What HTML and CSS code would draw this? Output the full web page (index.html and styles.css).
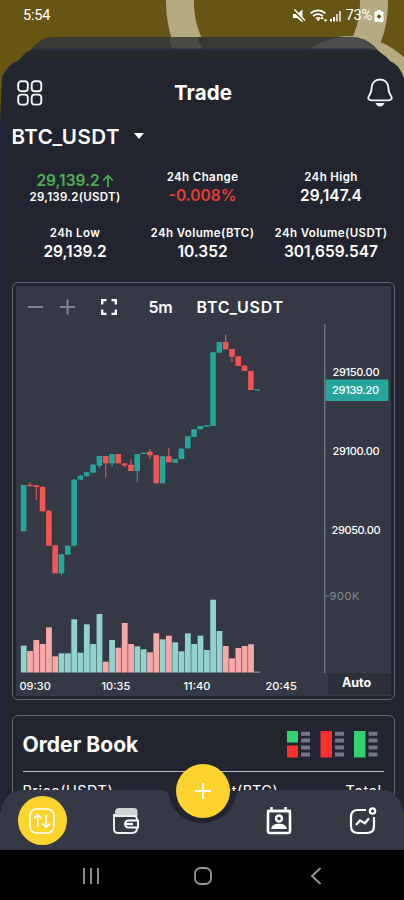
FILE: index.html
```html
<!DOCTYPE html>
<html lang="en">
<head>
<meta charset="utf-8">
<meta name="viewport" content="width=device-width, initial-scale=1">
<title>Trade</title>
<link rel="stylesheet" href="styles.css">
</head>
<body>
<div class="phone">
  <svg class="backdrop" width="404" height="120" viewBox="0 0 404 120">
    <rect width="404" height="120" fill="#675514"/>
    <g fill="none" stroke="#b5aa82" stroke-width="28">
      <circle cx="277" cy="3" r="97"/>
      <circle cx="350" cy="115" r="65"/>
    </g>
    <path d="M17 64 L35 45 Q43 37 53 37 H351 Q364 37 374 46 L391 64Z" fill="#383933"/>
    <path d="M169 37H197L203 50H172Z" fill="#4a4b42"/>
    <path d="M307 50Q326 37 347 37Q365 37 377 50Z" fill="#4b4c4b"/>
    <path d="M2 77Q8 64 19 60Q28 49 35 49H370Q382 51 390 61Q399 64 404 78V120H0Z" fill="#24282d"/>
    <path d="M35 49.5H370" stroke="#262d43" stroke-width="2"/>
  </svg>
  <header class="status">
    <span>5:54</span>
    <div class="status-icons">
      <svg width="52" height="16" viewBox="0 0 52 16" fill="#fff">
        <path d="M0 6h4l5.500-4.500v13L4 10H0z"/>
        <path d="M0 2l12 11" stroke="#675514" stroke-width="2.500"/><path d="M1.500 1.500l10.500 11" stroke="#fff" stroke-width="1.500"/>
        <g fill="none" stroke="#fff" stroke-width="1.700"><path d="M17.500 5.200Q25 -.5 32.500 5.200M20 8Q25 4.200 30 8M23 10.500q2-1.500 4 0"/></g>
        <path d="M23.500 11h3.500l-1.700 2.300zM29 8.500l2 2.500h-4zM32.500 14l-2-2.500h4z"/>
        <path d="M37 11h2v2.500h-2zM40 9h2v4.500h-2z"/><path d="M43 6h2v7.500h-2zM46 3h2v10.500h-2z" opacity=".7"/>
      </svg>
      <span class="battery-label">73%</span>
      <svg width="10" height="12" viewBox="0 0 10 12"><path d="M3 0h4v1.500h1.500q1 0 1 1V11q0 1-1 1h-7q-1 0-1-1V2.500q0-1 1-1H3z" fill="#fff"/><path d="M5 4l2.300 2.500L5 9 2.700 6.500z" fill="#675514"/></svg>
    </div>
  </header>

  <main class="sheet">
    <div class="titlebar">
      <svg width="26" height="26" viewBox="0 0 26 26" fill="none" stroke="#f4f4f6" stroke-width="1.9"><rect x="1.200" y="1.200" width="9.600" height="10" rx="3"/><rect x="14.700" y="1.200" width="9.600" height="10" rx="3"/><rect x="1.200" y="14.600" width="9.600" height="10" rx="3"/><rect x="14.700" y="14.600" width="9.600" height="10" rx="3"/></svg>
      <h1>Trade</h1>
      <svg width="26" height="30" viewBox="0 0 26 30"><path d="M13 1.500C8 1.500 4.600 5 4.600 10c0 4.500-.9 5.300-2.500 7.700-1.800 2.700-.6 4.700 2.900 4.700h16c3.500 0 4.700-2 2.900-4.700-1.600-2.400-2.500-3.200-2.500-7.700C21.400 5 18 1.500 13 1.500z" fill="none" stroke="#f4f4f6" stroke-width="1.900"/><path d="M8.500 25h9q-1.500 3.500-4.500 3.500T8.500 25z" fill="#f4f4f6"/></svg>
    </div>

    <div class="pair"><span>BTC_USDT</span><i class="caret"></i></div>

    <section class="stats">
      <div class="stat last"><b class="up">29,139.2<svg width="12" height="14" viewBox="0 0 12 14" fill="none" stroke="#4caf50" stroke-width="1.700"><path d="M6 13V2M1.200 6.500L6 1.700l4.800 4.800"/></svg></b><small>29,139.2(USDT)</small></div>
      <div class="stat"><small>24h Change</small><b class="down">-0.008%</b></div>
      <div class="stat"><small>24h High</small><b>29,147.4</b></div>
      <div class="stat"><small>24h Low</small><b>29,139.2</b></div>
      <div class="stat"><small>24h Volume(BTC)</small><b>10.352</b></div>
      <div class="stat"><small>24h Volume(USDT)</small><b>301,659.547</b></div>
    </section>

    <section class="card chart-card">
      <div class="chart-panel">
        <div class="toolbar">
          <svg class="zoom-icons" width="48" height="18" viewBox="0 0 48 18" stroke="#848791" stroke-width="2"><path d="M0 9h15M32 9h15M39.500 1.500v15"/></svg>
          <svg class="expand" width="16" height="16" viewBox="0 0 16 16" fill="none" stroke="#fff" stroke-width="2.300"><path d="M1.200 5.500V1.200h4.300M10.500 1.200h4.300v4.300M14.800 10.500v4.300h-4.300M5.500 14.800H1.200v-4.300"/></svg>
          <span class="interval">5m</span><span class="symbol">BTC_USDT</span>
        </div>
        <svg class="plot" id="plot" width="373" height="349" viewBox="16.500 324 373 349">
          <path d="M37 336V672M118 336V672M200 336V672M282 336V672M20 371H324M20 451H324M20 530H324" stroke="#393d48" fill="none"/>
          <g id="candles"></g><g id="volume"></g>
          <path d="M325.300 324V673" stroke="#777b85" stroke-width="1.300"/>
          <rect x="326" y="379.500" width="63" height="21.500" fill="#26a69a"/>
          <g class="prices"><text x="333" y="376.300" textLength="47">29150.00</text><text x="332.500" y="394.200" textLength="47">29139.20</text><text x="333" y="455.300" textLength="47">29100.00</text><text x="332" y="533.600" textLength="49">29050.00</text></g>
          <path d="M325.500 596h4" stroke="#777b85"/><text class="vol-label" x="330" y="600" textLength="30">900K</text>
        </svg>
        <div class="times"><span>09:30</span><span>10:35</span><span>11:40</span><span>20:45</span><b>Auto</b></div>
      </div>
    </section>

    <section class="card book">
      <div class="book-head">
        <h2>Order Book</h2>
        <svg width="91" height="27" viewBox="0 0 91 27"><path d="M0 0h11v11.500H0zM67 0h11.500v26.500H67z" fill="#31d36f"/><path d="M0 14.500h11V26.500H0zM33.500 0H45v26.500H33.500z" fill="#fd3030"/><path d="M14 2.800h9M14 9.500h9M14 16.500h9M14 23.500h9M48 2.800h9M48 9.500h9M48 16.500h9M48 23.500h9M81.500 2.800h9M81.500 9.500h9M81.500 16.500h9M81.500 23.500h9" stroke="#74778a" stroke-width="4"/></svg>
      </div>
      <div class="columns"><span>Price(USDT)</span><span>Amount(BTC)</span><span>Total</span></div>
    </section>
  </main>

  <nav class="tabs">
    <svg class="tabs-bg" width="404" height="62" viewBox="0 0 404 62"><path d="M0 62V27Q4 2 22 2H160Q168 2 169 8A34 33 0 0 0 236 8Q237 2 245 2H382Q400 2 404 27V62z" fill="#353945"/></svg>
    <div class="tab active"><svg width="28" height="28" viewBox="0 0 28 28" fill="none" stroke="#fff" stroke-width="1.600"><rect x="2" y="2" width="24" height="24" rx="6.500"/><path d="M9.800 20V8M6 11.500L9.800 7.700l3.800 3.800M18.200 8v12M14.400 16.500l3.800 3.800 3.800-3.800"/></svg></div>
    <div class="tab"><svg width="28" height="28" viewBox="0 0 28 28"><path d="M3 4Q4 1 7 1H22Q25 1 25.500 4V9H3z" fill="#d1d2d6"/><path d="M2 7V22Q2 26 6 26H20Q25 26 25 21M2 9H22Q25 9 25 13" fill="none" stroke="#f0f0f3" stroke-width="1.900"/><path d="M26 13.500H16.500a3.500 3.500 0 0 0 0 7H26z" fill="#353945" stroke="#fff" stroke-width="2"/><path d="M14 17h7" stroke="#fff" stroke-width="2.300"/></svg></div>
    <button class="fab" aria-label="Add"><svg width="18" height="18" viewBox="0 0 18 18"><path d="M1 9h16M9 1v16" stroke="#fff" stroke-width="2"/></svg></button>
    <div class="tab"><svg width="28" height="30" viewBox="0 0 28 30"><rect x="3" y="5" width="22" height="22" rx="2" fill="none" stroke="#fff" stroke-width="2.600"/><path d="M2 5h24M6.500 1v4M20.500 1v4" stroke="#fff" stroke-width="2.500"/><circle cx="14" cy="12.500" r="3" fill="none" stroke="#fff" stroke-width="2.400"/><path d="M6 23q1-5.200 8-5.200T22 23z" fill="#fff"/></svg></div>
    <div class="tab"><svg width="30" height="30" viewBox="0 0 30 30" fill="none" stroke="#fff" stroke-width="2.200"><path d="M19 4H11Q4 4 4 11V20Q4 27 11 27H20Q27 27 27 20V11"/><path d="M9 19l4-4.500 5 2.800 4-5"/><circle cx="25.500" cy="5" r="2.700"/></svg></div>
  </nav>
  <footer class="system">
    <svg width="18" height="18" viewBox="0 0 18 18"><path d="M2 1v16M9 1v16M16 1v16" stroke="#8c8c8c" stroke-width="2"/></svg>
    <svg width="20" height="20" viewBox="0 0 20 20"><rect x="2" y="2" width="16" height="16" rx="5.500" fill="none" stroke="#999" stroke-width="1.800"/></svg>
    <svg width="12" height="18" viewBox="0 0 12 18"><path d="M10.500 1L2 9l8.500 8" fill="none" stroke="#999" stroke-width="1.800"/></svg>
  </footer>
</div>
<script src="chart.js"></script>
</body>
</html>
```
FILE: styles.css
```css
* { box-sizing: border-box; }
body { margin: 0; background: #000; font-family: Inter, "Liberation Sans", sans-serif; color: #fff; }
h1, h2 { margin: 0; }
svg { display: block; flex: none; }
.phone { position: relative; width: 404px; height: 900px; overflow: hidden; background: #1d2742; display: flex; flex-direction: column; }
.backdrop { position: absolute; top: 0; left: 0; }
.status { position: relative; height: 61px; padding: 8px 20px 0 23px; display: flex; justify-content: space-between; align-items: flex-start; font: 400 14.5px/16px Roboto, sans-serif; letter-spacing: -.2px; }
.status-icons { display: flex; align-items: center; gap: 1px; }
.battery-label { margin-right: 1px; }
.sheet { position: relative; height: 789px; flex: none; margin: 0 1px 0 2px; border-radius: 24px 24px 0 0; background: #22252f; overflow: hidden; padding: 16px 9px 0 9.500px; border-top: 1px solid #242a3e; }
.titlebar { height: 30px; display: flex; justify-content: space-between; align-items: center; margin: 0 1px 0 5.500px; }
.titlebar h1 { font-size: 20.500px; line-height: 30px; font-weight: 700; letter-spacing: .1px; margin-right: 4px; }
.pair { display: flex; align-items: center; height: 24px; margin-top: 16px; font-size: 20.500px; font-weight: 600; letter-spacing: .5px; }
.caret { margin-left: 14px; border: 5px solid transparent; border-top: 6px solid #fff; border-bottom: 0; }
.stats { display: grid; grid-template-columns: 127px 128px 129px; grid-template-rows: 56px 56px; margin-top: 22px; }
.stat { display: flex; flex-direction: column; align-items: center; white-space: nowrap; }
.stat small { font-size: 11.500px; line-height: 15px; font-weight: 600; letter-spacing: .4px; }
.stat b { font-size: 15.500px; line-height: 21px; font-weight: 600; display: flex; align-items: center; letter-spacing: 0; }
.stat .up { color: #4caf50; gap: 2px; }
.stat .down { color: #e83d35; }
.stat.last { padding-top: 1px; }
.stat.last b { line-height: 19px; }
.stat.last small { letter-spacing: .3px; }
.card { border: 1.500px solid #62656f; border-radius: 6px; }
.chart-card { height: 418px; padding: 3px; width: 383px; }
.chart-panel { height: 410px; background: #353945; overflow: hidden; }
.toolbar { height: 38px; display: flex; align-items: center; padding-left: 12px; font-size: 16px; font-weight: 600; line-height: 20px; padding-top: 4px; }
.expand { margin-left: 25px; }
.interval { margin-left: 32px; letter-spacing: -.2px; }
.symbol { margin-left: 24px; letter-spacing: .7px; }
.prices { font-size: 11px; font-weight: 500; fill: #fff; }
.vol-label { font-size: 11px; fill: #858993; }
.times { display: grid; grid-template-columns: 82px 82px 82px 62px auto; grid-template-rows: 22px; padding-left: 4px; height: 22px; font-size: 11px; line-height: 27px; font-weight: 500; }
.times b { background: #2d303a; font-size: 12.500px; line-height: 20px; text-align: center; font-weight: 700; padding-right: 5px; }
.book { height: 160px; margin-top: 15px; padding: 13px 10px 0; width: 383px; }
.book-head { display: flex; justify-content: space-between; align-items: center; height: 43px; padding: 0 6px 11px 0; border-bottom: 1.500px solid #b9bbc1; }
.book-head h2 { font-size: 21px; font-weight: 700; letter-spacing: .05px; }
.columns { display: flex; justify-content: space-between; padding: 9px 2px 0 0; height: 19px; overflow: hidden; font-size: 14.500px; line-height: 20px; letter-spacing: .5px; }
.tabs { position: absolute; left: 0; right: 0; bottom: 50px; height: 62px; display: grid; grid-template-columns: 84px 84px 70px 82px 84px; align-items: center; justify-items: center; padding-top: 3px; }
.tabs-bg { position: absolute; inset: 0; }
.tab { position: relative; }
.active { width: 49px; height: 49px; border-radius: 50%; background: #fdd42e; display: flex; align-items: center; justify-content: center; }
.fab { position: relative; width: 54px; height: 54px; padding: 0; border: 0; border-radius: 50%; background: #fdd42e; display: flex; align-items: center; justify-content: center; align-self: start; margin-top: -27px; }
.system { position: relative; flex: none; height: 50px; background: #000; display: grid; grid-template-columns: 1fr 48px 1fr; align-items: center; justify-items: center; padding: 2px 0 0 2px; }
```
FILE: chart.js
```javascript
// Each entry: colour, body top, body bottom, wick top, wick bottom, volume top.
const bars = [
  ["g",485,531.3,485,531.3,645.7],["r",484.7,486,482,486.7,651],["r",485.3,487,485,500.3,640],["r",487,511.3,486,511.3,644],["r",510.7,545.7,510,545.7,627.3],["r",545.3,573.3,545,573.3,656.3],
  ["g",554.3,573.3,554,575,653.3],["g",545.7,554.7,545,554.7,653.3],["g",479.7,545.7,479,545.7,619.3],["g",475.7,479.7,475,479.7,652.7],["g",472.3,476.3,472,476.3,624.3],["g",464.7,472.7,464,472.7,644],
  ["g",456,465.7,456,468.3,614],["r",456,463.3,456,477.7,661.7],["g",454,463.3,454,466.7,640],["r",454,463.3,454,463.3,647.7],["r",463.3,465.3,463,467,623],["r",464.7,471,459.3,471,644],
  ["g",454,471,454,482.3,646.3],["g",452.7,454,452,454,649.3],["r",451.7,455.3,449.3,459.3,652.3],["r",455,483.3,455,483.3,633.3],["g",456.3,483.3,456,483.3,639.3],["r",456.3,462.3,448.3,462.3,635.7],
  ["g",459,462.7,459,462.7,642.3],["g",448.7,459,448,459,651.3],["g",436.3,448.3,436,448.3,633.3],["g",429.3,437,429,437,644],["g",426,429.3,426,429.3,635.7],["g",425.3,426.7,425,426.7,650],
  ["g",352.3,426,352,426,599.7],["g",342,352.7,342,352.7,631],["r",342,349.3,334.7,349.3,646],["r",349,356.7,349,362,658.3],["r",356.3,366,356,366,648],["r",365.7,371,365,371,646],
  ["r",371,390,371,390,644.3],["g",389.3,390.5,389.3,390.5,671.7]
];
const body = { g: "#26a69a", r: "#f25555" };
const vol = { g: "#92d2cc", r: "#f7a9a7" };
const rect = (x, y, w, h, fill) => `<rect x="${x}" y="${y}" width="${w}" height="${h}" fill="${fill}"/>`;
let candles = "", volume = "";
bars.forEach(([c, top, bottom, high, low, v], i) => {
  const x = 21.3 + i * 6.314;
  candles += rect(x, top, 5.6, bottom - top, body[c]) + rect(x + 2.3, high, 1.1, low - high, body[c]);
  volume += rect(x, v, 5.8, 672.5 - v, vol[c]);
});
document.getElementById("candles").innerHTML = candles;
document.getElementById("volume").innerHTML = volume;
```
